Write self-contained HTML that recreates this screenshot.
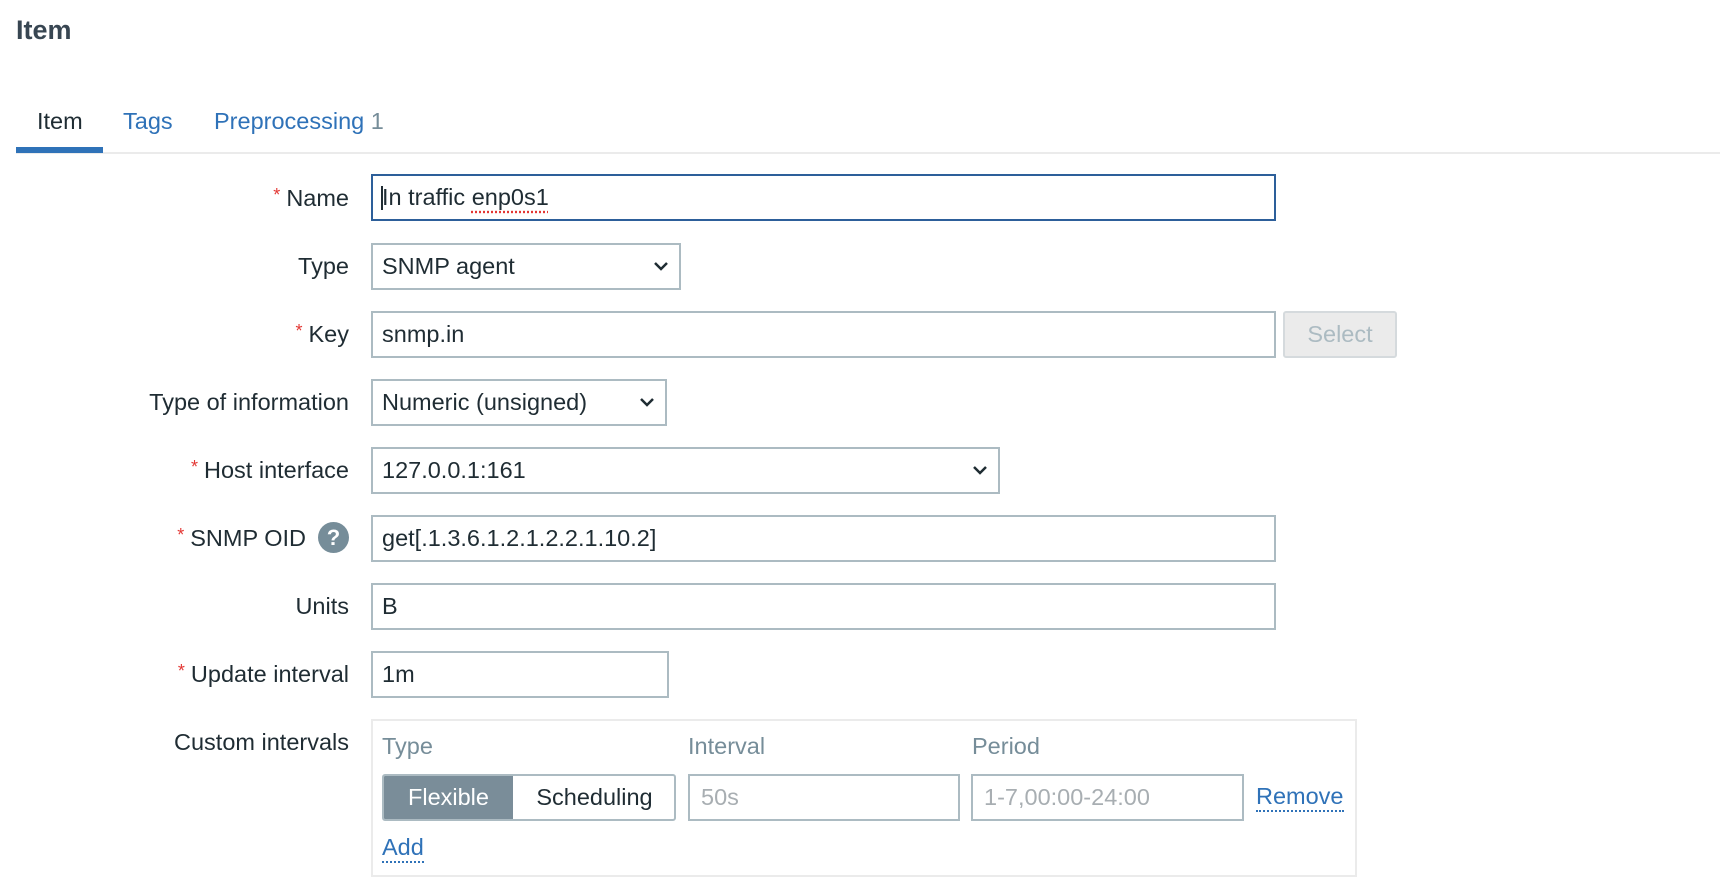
<!DOCTYPE html>
<html><head><meta charset="utf-8"><style>
*{box-sizing:border-box;margin:0;padding:0}
body{width:1720px;height:878px;background:#fff;font-family:"Liberation Sans",Arial,sans-serif;color:#1f2c33;position:relative;overflow:hidden}
.a{position:absolute}
.lbl{position:absolute;right:1371px;font-size:23.5px;line-height:28px;white-space:nowrap;text-align:right}
.lbl i{color:#e33734;font-style:normal;font-size:18px;position:relative;top:-5px;line-height:0;margin-right:6px}
.inp{position:absolute;border:2px solid #acbbc2;background:#fff;font-size:23.5px;line-height:43px;padding-left:9px;white-space:nowrap;height:47px}
.sel svg{position:absolute;right:10px;top:15px}
.blue{color:#2f72b8}
.hdr{position:absolute;font-size:23.5px;color:#768d99;top:733px}
</style></head><body>
<div class="a" style="left:16px;top:15px;font-size:27px;font-weight:bold;color:#384652">Item</div>

<div class="a" style="left:37px;top:108px;font-size:23.5px">Item</div>
<div class="a blue" style="left:123px;top:108px;font-size:23.5px">Tags</div>
<div class="a blue" style="left:214px;top:108px;font-size:23.5px">Preprocessing <span style="color:#768d99">1</span></div>
<div class="a" style="left:16px;top:152px;width:1704px;height:2px;background:#ebebeb"></div>
<div class="a" style="left:16px;top:147px;width:87px;height:6px;background:#2f72b8"></div>

<div class="lbl" style="top:184px"><i>*</i>Name</div>
<div class="inp" style="left:371px;top:174px;width:905px;border-color:#2d5f9a">In traffic <span style="text-decoration:underline dotted #e33734;text-underline-offset:6px">enp0s1</span></div>
<div class="a" style="left:381px;top:186px;width:2px;height:24px;background:#1f2c33"></div>

<div class="lbl" style="top:252px">Type</div>
<div class="inp sel" style="left:371px;top:243px;width:310px">SNMP agent<svg width="16" height="12" viewBox="0 0 16 12"><path d="M2 3l6 6 6-6" fill="none" stroke="#1f2c33" stroke-width="2.5"/></svg></div>

<div class="lbl" style="top:320px"><i>*</i>Key</div>
<div class="inp" style="left:371px;top:311px;width:905px">snmp.in</div>
<div class="a" style="left:1283px;top:311px;width:114px;height:47px;background:#ebebeb;border:2px solid #d5dadd;border-radius:3px;color:#acbbc2;font-size:23.5px;line-height:43px;text-align:center">Select</div>

<div class="lbl" style="top:388px">Type of information</div>
<div class="inp sel" style="left:371px;top:379px;width:296px">Numeric (unsigned)<svg width="16" height="12" viewBox="0 0 16 12"><path d="M2 3l6 6 6-6" fill="none" stroke="#1f2c33" stroke-width="2.5"/></svg></div>

<div class="lbl" style="top:456px"><i>*</i>Host interface</div>
<div class="inp sel" style="left:371px;top:447px;width:629px">127.0.0.1:161<svg width="16" height="12" viewBox="0 0 16 12"><path d="M2 3l6 6 6-6" fill="none" stroke="#1f2c33" stroke-width="2.5"/></svg></div>

<div class="lbl" style="top:524px;right:1414px"><i>*</i>SNMP OID</div>
<div class="a" style="left:318px;top:522px;width:31px;height:31px;border-radius:50%;background:#768d99;color:#fff;font-size:22px;font-weight:bold;line-height:31px;text-align:center">?</div>
<div class="inp" style="left:371px;top:515px;width:905px">get[.1.3.6.1.2.1.2.2.1.10.2]</div>

<div class="lbl" style="top:592px">Units</div>
<div class="inp" style="left:371px;top:583px;width:905px">B</div>

<div class="lbl" style="top:660px"><i>*</i>Update interval</div>
<div class="inp" style="left:371px;top:651px;width:298px">1m</div>

<div class="lbl" style="top:728px">Custom intervals</div>
<div class="a" style="left:371px;top:719px;width:986px;height:158px;border:2px solid #ebebeb"></div>
<div class="hdr" style="left:382px">Type</div>
<div class="hdr" style="left:688px">Interval</div>
<div class="hdr" style="left:972px">Period</div>
<div class="a" style="left:382px;top:774px;width:294px;height:47px;border:2px solid #acbbc2;border-radius:3px;overflow:hidden;font-size:23.5px;line-height:43px">
<div class="a" style="left:0;top:0;width:129px;height:43px;background:#7a8d99;color:#fff;text-align:center">Flexible</div>
<div class="a" style="left:129px;top:0;width:163px;height:43px;text-align:center">Scheduling</div>
</div>
<div class="inp" style="left:688px;top:774px;width:272px;color:#a8aeb2;padding-left:11px">50s</div>
<div class="inp" style="left:971px;top:774px;width:273px;color:#a8aeb2;padding-left:11px">1-7,00:00-24:00</div>
<div class="a blue" style="left:1256px;top:783px;font-size:23.5px;border-bottom:2px dotted #2f72b8;line-height:27px">Remove</div>
<div class="a blue" style="left:382px;top:834px;font-size:23.5px;border-bottom:2px dotted #2f72b8;line-height:27px">Add</div>
</body></html>
